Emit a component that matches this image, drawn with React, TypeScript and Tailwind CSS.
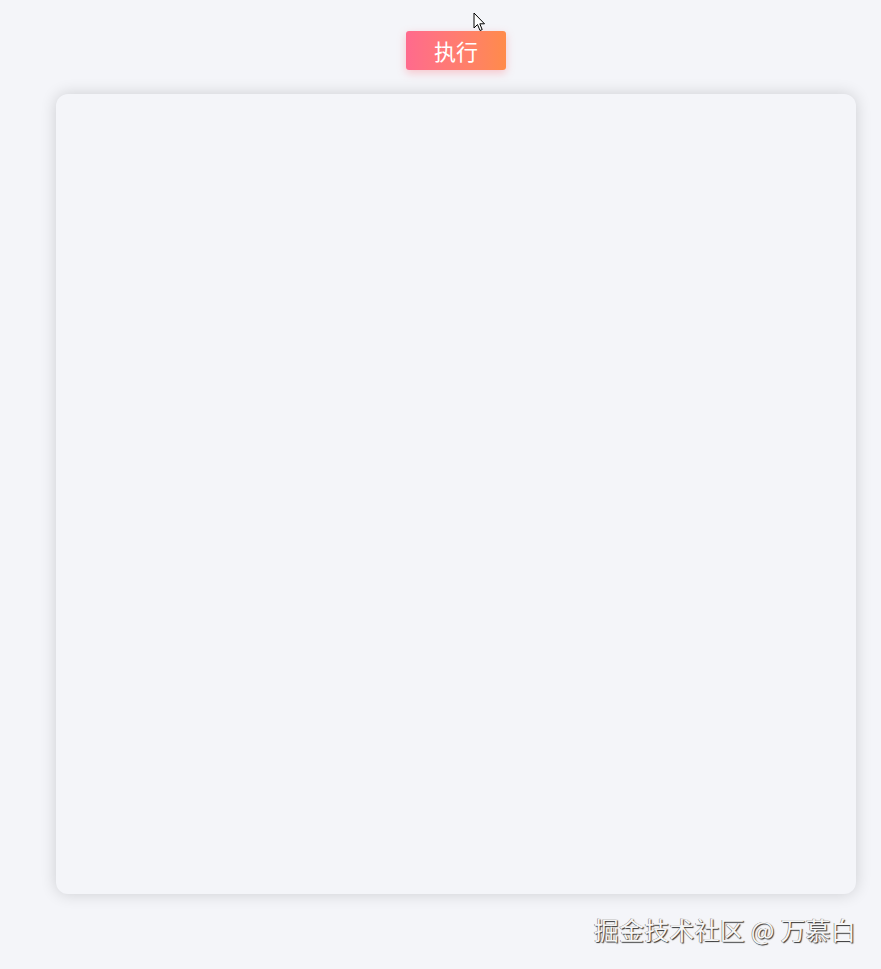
import React from 'react';

const font = '"Noto Sans CJK SC", "Noto Sans", sans-serif';

export default function App() {
  return (
    <div className="relative min-h-[969px] w-[881px] bg-[#f4f5f9]" style={{ fontFamily: font }}>
      {/* 按钮 */}
      <div className="flex justify-center pt-[31px] pl-[31px]">
        <button className="h-[39px] w-[100px] rounded-[3px] bg-gradient-to-r from-[#ff6a8d] to-[#ff8b4a] text-[22px] leading-[39px] text-white shadow-[0_3px_8px_rgba(255,110,120,0.35)]">
          执行
        </button>
      </div>

      {/* 画布 */}
      <div className="ml-[56px] mt-[24px] h-[800px] w-[800px] rounded-[12px] bg-[#f4f5f9] shadow-[0_0_16px_rgba(0,0,0,0.16)]" />

      {/* 水印 */}
      <div className="flex justify-end pr-[25px] pt-[17px]">
        <span className="text-[25px] leading-[36px] tracking-[0.2px] text-[#f6f6f6] [text-shadow:1px_1px_1px_#333,-0.5px_-0.5px_0_#777]">
          掘金技术社区 @ 万慕白
        </span>
      </div>

      {/* 鼠标指针 */}
      <svg className="absolute left-[473px] top-[12px]" width="14" height="21" viewBox="0 0 14 21">
        <path d="M1 1 L1 16 L4.5 12.5 L7 18.5 L9.2 17.6 L6.8 11.8 L11.5 11.8 Z" fill="#fff" stroke="#000" strokeWidth="1" strokeLinejoin="round" />
      </svg>
    </div>
  );
}
